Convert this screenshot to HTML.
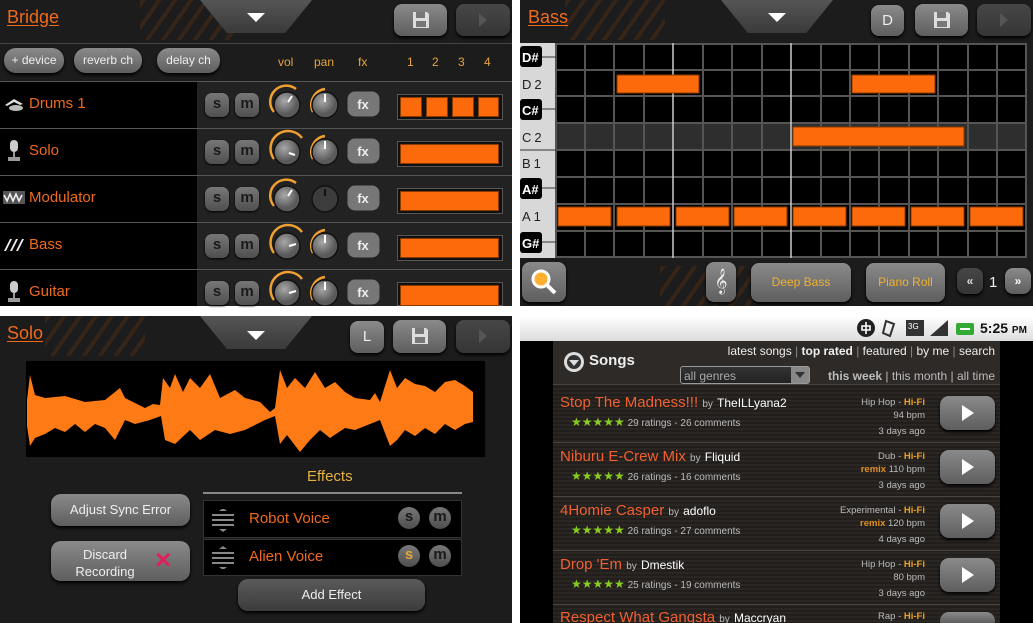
<!DOCTYPE html>
<html style="width:1033px;height:623px;overflow:hidden"><head><meta charset="utf-8"><style>
*{margin:0;padding:0;box-sizing:border-box}
body{width:1033px;height:623px;background:#fff;position:relative;overflow:hidden;font-family:"Liberation Sans",sans-serif}
.a{position:absolute}
.p{position:absolute;background:#1c1c1c;overflow:hidden}
.ttl{position:absolute;color:#f06a1c;font-size:18px;text-decoration:underline;text-underline-offset:2px}
.notch{position:absolute;width:112px;height:33px;background:linear-gradient(#555,#3a3a3a);clip-path:polygon(0 0,100% 0,76% 100%,24% 100%);border-radius:0 0 10px 10px}
.tri{position:absolute;width:0;height:0;border-left:9px solid transparent;border-right:9px solid transparent;border-top:9px solid #fff}
.btn{position:absolute;background:linear-gradient(#8a8a8a,#5e5e5e);border-radius:8px;box-shadow:0 2px 3px #000;color:#eee;text-align:center;font-size:12px}
.dim{background:linear-gradient(#474747,#353535);color:#555}
.sm{position:absolute;width:24px;height:24px;border-radius:7px;background:linear-gradient(#777,#4f4f4f);color:#1a1a1a;font-weight:bold;font-size:15px;text-align:center;line-height:22px;box-shadow:0 1px 2px #000}
.row{position:absolute;left:0;width:512px;height:47px;border-top:1px solid #555}
.nm{position:absolute;left:29px;top:13px;color:#f06a1c;font-size:15px}
.bar{position:absolute;background:#fd6a0c;border:1px solid #8a3a00}
.lbl{position:absolute;color:#e6a53a;font-size:12px}
.str{position:absolute;left:0;top:0;width:100px;height:40px;background:repeating-linear-gradient(-55deg,transparent 0 9px,#4a2a14 9px 13px);opacity:.55}
.st{color:#8c2;font-size:12px}
</style></head><body>

<!-- TOP LEFT -->
<div class="p" style="left:0;top:0;width:512px;height:306px">
 <div class="str" style="left:140px"></div>
 <div class="ttl" style="left:7px;top:7px">Bridge</div>
 <div class="notch" style="left:200px;top:0"></div><div class="tri" style="left:247px;top:13px"></div>
 <div class="btn" style="left:394px;top:4px;width:53px;height:32px"><svg width="20" height="20" viewBox="0 0 20 20" style="margin-top:6px"><path d="M2 2h14l2 2v14H2z" fill="#ddd"/><rect x="5" y="2" width="9" height="6" fill="#777"/><rect x="5" y="11" width="10" height="6" fill="#777"/></svg></div>
 <div class="btn dim" style="left:456px;top:4px;width:54px;height:32px"><svg width="12" height="16" style="margin-top:8px"><path d="M2 1l8 7-8 7z" fill="#555"/></svg></div>
 <div class="a" style="left:0;top:43px;width:512px;height:1px;background:#444"></div>
 <div class="btn" style="left:4px;top:48px;width:60px;height:25px;line-height:25px;border-radius:12px">+ device</div>
 <div class="btn" style="left:74px;top:48px;width:68px;height:25px;line-height:25px;border-radius:12px">reverb ch</div>
 <div class="btn" style="left:157px;top:48px;width:63px;height:25px;line-height:25px;border-radius:12px">delay ch</div>
 <div class="lbl" style="left:278px;top:55px">vol</div><div class="lbl" style="left:314px;top:55px">pan</div><div class="lbl" style="left:358px;top:55px">fx</div>
 <div class="lbl" style="left:407px;top:55px">1</div><div class="lbl" style="left:432px;top:55px">2</div><div class="lbl" style="left:458px;top:55px">3</div><div class="lbl" style="left:484px;top:55px">4</div>
 <div class="a" style="left:0;top:81px;width:512px;height:225px;background:#222"></div>
 <div class="a" style="left:0;top:81px;width:197px;height:225px;background:#000"></div>

 <div class="row" style="top:81px">
  <svg class="a" style="left:4px;top:14px" width="20" height="16"><path d="M1 9L10 3l9 5-3 1-6-3-7 4z" fill="#ddd"/><ellipse cx="12" cy="12" rx="7" ry="3" fill="#bbb"/></svg>
  <div class="nm">Drums 1</div>
 </div>
 <div class="row" style="top:128px"><svg class="a" style="left:7px;top:11px" width="14" height="22"><rect x="3" y="0" width="8" height="12" rx="4" fill="#ccc"/><rect x="1" y="17" width="12" height="4" fill="#999"/><rect x="6" y="12" width="2" height="6" fill="#999"/></svg><div class="nm">Solo</div></div>
 <div class="row" style="top:175px"><svg class="a" style="left:3px;top:15px" width="22" height="13"><rect width="22" height="13" fill="#555"/><path d="M1 4l3 6 3-7 3 7 3-7 3 7 3-6" stroke="#eee" stroke-width="1.6" fill="none"/></svg><div class="nm">Modulator</div></div>
 <div class="row" style="top:222px"><svg class="a" style="left:3px;top:15px" width="22" height="14"><path d="M1 13l6-12h2L3 13zM7 13l6-12h2L9 13zM13 13l6-12h2L15 13z" fill="#eee"/></svg><div class="nm">Bass</div></div>
 <div class="row" style="top:269px"><svg class="a" style="left:7px;top:11px" width="14" height="22"><rect x="3" y="0" width="8" height="12" rx="4" fill="#ccc"/><rect x="1" y="17" width="12" height="4" fill="#999"/><rect x="6" y="12" width="2" height="6" fill="#999"/></svg><div class="nm">Guitar</div></div>
</div>

<div class="sm" style="left:205px;top:93px">s</div><div class="sm" style="left:235px;top:93px">m</div>
<div class="sm" style="left:205px;top:140px">s</div><div class="sm" style="left:235px;top:140px">m</div>
<div class="sm" style="left:205px;top:187px">s</div><div class="sm" style="left:235px;top:187px">m</div>
<div class="sm" style="left:205px;top:234px">s</div><div class="sm" style="left:235px;top:234px">m</div>
<div class="sm" style="left:205px;top:281px">s</div><div class="sm" style="left:235px;top:281px">m</div>

<svg class="a" style="left:265px;top:82px" width="125" height="224">
 <defs><radialGradient id="kg" cx="40%" cy="35%"><stop offset="0" stop-color="#a8a8a8"/><stop offset="1" stop-color="#5a5a5a"/></radialGradient></defs>
 <g fill="none" stroke="#f0a030" stroke-width="2.5">
  <path d="M9 30A16 16 0 0 1 31 7"/><path d="M48 30A16 16 0 0 1 60 7"/>
  <path d="M9 77A16 16 0 0 1 37 56"/><path d="M48 77A16 16 0 0 1 60 54"/>
  <path d="M9 124A16 16 0 0 1 31 101"/>
  <path d="M9 171A16 16 0 0 1 37 150"/><path d="M48 171A16 16 0 0 1 60 148"/>
  <path d="M9 218A16 16 0 0 1 37 197"/><path d="M48 218A16 16 0 0 1 60 195"/>
 </g>
 <g fill="url(#kg)" stroke="#111" stroke-width="1.5">
  <circle cx="22" cy="23" r="13"/><circle cx="60" cy="23" r="13"/>
  <circle cx="22" cy="70" r="13"/><circle cx="60" cy="70" r="13"/>
  <circle cx="22" cy="117" r="13"/><circle cx="60" cy="117" r="13" fill="#3c3c3c"/>
  <circle cx="22" cy="164" r="13"/><circle cx="60" cy="164" r="13"/>
  <circle cx="22" cy="211" r="13"/><circle cx="60" cy="211" r="13"/>
 </g>
 <g stroke="#fff" stroke-width="2">
  <path d="M23 20l4-6"/><path d="M60 20v-8"/>
  <path d="M24 71l6 2"/><path d="M60 67v-8"/>
  <path d="M23 114l4-6"/><path d="M60 114v-7" stroke="#111"/>
  <path d="M24 164l7-2"/><path d="M60 161v-8"/>
  <path d="M24 211l7-2"/><path d="M60 208v-8"/>
 </g>
 <g fill="#777" stroke="#222"><rect x="82" y="9" width="33" height="26" rx="8"/><rect x="82" y="56" width="33" height="26" rx="8"/><rect x="82" y="103" width="33" height="26" rx="8"/><rect x="82" y="150" width="33" height="26" rx="8"/><rect x="82" y="197" width="33" height="26" rx="8"/></g>
 <g fill="#eee" font-size="13" font-family="Liberation Sans" text-anchor="middle" font-weight="bold"><text x="98" y="27">fx</text><text x="98" y="74">fx</text><text x="98" y="121">fx</text><text x="98" y="168">fx</text><text x="98" y="215">fx</text></g>
</svg>
<div class="a" style="left:397px;top:94px;width:106px;height:26px;border:1px solid #555;background:#111"></div>
<div class="bar" style="left:400px;top:97px;width:22px;height:20px"></div><div class="bar" style="left:426px;top:97px;width:22px;height:20px"></div><div class="bar" style="left:452px;top:97px;width:22px;height:20px"></div><div class="bar" style="left:478px;top:97px;width:21px;height:20px"></div>
<div class="a" style="left:397px;top:141px;width:106px;height:26px;border:1px solid #555;background:#111"></div><div class="bar" style="left:400px;top:144px;width:99px;height:20px"></div>
<div class="a" style="left:397px;top:188px;width:106px;height:26px;border:1px solid #555;background:#111"></div><div class="bar" style="left:400px;top:191px;width:99px;height:20px"></div>
<div class="a" style="left:397px;top:235px;width:106px;height:26px;border:1px solid #555;background:#111"></div><div class="bar" style="left:400px;top:238px;width:99px;height:20px"></div>
<div class="a" style="left:397px;top:282px;width:106px;height:24px;border:1px solid #555;background:#111"></div><div class="bar" style="left:400px;top:285px;width:99px;height:21px"></div>

<!-- TOP RIGHT -->
<div class="p" style="left:520px;top:0;width:513px;height:306px">
 <div class="str" style="left:45px"></div>
 <div class="ttl" style="left:8px;top:7px">Bass</div>
 <div class="notch" style="left:201px;top:0"></div><div class="tri" style="left:248px;top:13px"></div>
 <div class="btn" style="left:351px;top:5px;width:33px;height:31px;line-height:31px;font-size:15px">D</div>
 <div class="btn" style="left:395px;top:4px;width:53px;height:32px"><svg width="20" height="20" viewBox="0 0 20 20" style="margin-top:6px"><path d="M2 2h14l2 2v14H2z" fill="#ddd"/><rect x="5" y="2" width="9" height="6" fill="#777"/><rect x="5" y="11" width="10" height="6" fill="#777"/></svg></div>
 <div class="btn dim" style="left:457px;top:4px;width:54px;height:32px"><svg width="12" height="16" style="margin-top:8px"><path d="M2 1l8 7-8 7z" fill="#555"/></svg></div>
 <svg class="a" style="left:0;top:43px" width="513" height="215">
  <rect x="0" y="0" width="36" height="215" fill="#d8d8d8"/>
  <rect x="36" y="0" width="470" height="215" fill="#000"/>
  <rect x="36" y="80" width="470" height="27" fill="#2e2e2e"/>
  <g stroke="#555" stroke-width="2">
   <path d="M36 1H506M36 27H506M36 53H506M36 80H506M36 107H506M36 134H506M36 161H506M36 188H506M36 214H506"/>
   <path d="M36 0V215M65 0V215M94 0V215M124 0V215M183 0V215M212 0V215M242 0V215M301 0V215M330 0V215M359 0V215M389 0V215M418 0V215M448 0V215M477 0V215M506 0V215"/>
  </g>
  <g stroke="#ccc" stroke-width="1.5"><path d="M153 0V215M271 0V215"/></g>
  <g fill="#000"><rect x="0" y="3" width="22" height="21" rx="3"/><rect x="0" y="56" width="22" height="21" rx="3"/><rect x="0" y="135" width="22" height="21" rx="3"/><rect x="0" y="189" width="22" height="21" rx="3"/></g>
  <g stroke="#333"><path d="M22 14H36M22 66H36M22 145H36M22 199H36M0 107H36"/></g>
  <g font-family="Liberation Sans" font-size="13" font-weight="bold"><g fill="#fff"><text x="2" y="19">D#</text><text x="2" y="72">C#</text><text x="2" y="151">A#</text><text x="2" y="205">G#</text></g>
  <g fill="#222" font-weight="normal" letter-spacing="3"><text x="2" y="46">D2</text><text x="2" y="99">C2</text><text x="2" y="125">B1</text><text x="2" y="178">A1</text></g></g>
  <g fill="#fd6a0c" stroke="#8a3a00"><rect x="97" y="32" width="82" height="18"/><rect x="332" y="32" width="83" height="18"/><rect x="273" y="84" width="171" height="19"/>
   <rect x="38" y="164" width="53" height="19"/><rect x="97" y="164" width="53" height="19"/><rect x="156" y="164" width="53" height="19"/><rect x="214" y="164" width="53" height="19"/><rect x="273" y="164" width="53" height="19"/><rect x="332" y="164" width="53" height="19"/><rect x="391" y="164" width="53" height="19"/><rect x="450" y="164" width="53" height="19"/></g>
 </svg>
 <div class="str" style="left:140px;top:266px"></div>
 <div class="btn" style="left:2px;top:262px;width:44px;height:40px"><svg width="30" height="30" style="margin-top:5px"><circle cx="12" cy="12" r="8" stroke="#fff" stroke-width="3" fill="#ffb030"/><path d="M18 18l8 8" stroke="#fff" stroke-width="4"/></svg></div>
 <div class="btn" style="left:186px;top:262px;width:30px;height:40px;font-size:22px;line-height:38px">𝄞</div>
 <div class="btn" style="left:231px;top:263px;width:100px;height:39px;line-height:39px;color:#f0b030">Deep Bass</div>
 <div class="btn" style="left:346px;top:263px;width:79px;height:39px;line-height:39px;color:#f0b030">Piano Roll</div>
 <div class="btn dim" style="left:437px;top:268px;width:26px;height:26px;line-height:26px;color:#ddd;font-weight:bold">«</div>
 <div class="a" style="left:469px;top:274px;color:#eee;font-size:15px">1</div>
 <div class="btn" style="left:485px;top:268px;width:26px;height:26px;line-height:26px;color:#fff;font-weight:bold">»</div>
</div>

<!-- BOTTOM LEFT -->
<div class="p" style="left:0;top:316px;width:512px;height:307px">
 <div class="str" style="left:45px"></div>
 <div class="ttl" style="left:7px;top:7px">Solo</div>
 <div class="notch" style="left:200px;top:0"></div><div class="tri" style="left:247px;top:15px"></div>
 <div class="btn" style="left:350px;top:5px;width:34px;height:32px;line-height:32px;font-size:15px">L</div>
 <div class="btn" style="left:393px;top:4px;width:53px;height:33px"><svg width="20" height="20" viewBox="0 0 20 20" style="margin-top:6px"><path d="M2 2h14l2 2v14H2z" fill="#ddd"/><rect x="5" y="2" width="9" height="6" fill="#777"/><rect x="5" y="11" width="10" height="6" fill="#777"/></svg></div>
 <div class="btn dim" style="left:456px;top:4px;width:54px;height:33px"><svg width="12" height="16" style="margin-top:8px"><path d="M2 1l8 7-8 7z" fill="#555"/></svg></div>
 <svg class="a" style="left:25px;top:44px" width="461" height="98"><rect width="461" height="98" fill="#000" stroke="#333"/>
  <polygon fill="#fd7a14" points="2,40 5,15 10,35 20,38 40,36 60,42 80,40 95,28 100,38 120,48 128,44 135,45 138,18 145,28 150,14 158,32 165,18 175,28 185,14 195,38 210,30 220,38 235,42 245,52 250,48 255,10 262,28 270,18 280,28 290,12 300,28 310,22 320,32 330,38 345,40 350,33 355,42 365,10 372,28 380,18 390,24 400,26 410,32 420,22 430,20 440,26 448,32 448,62 440,64 430,70 420,64 410,74 400,68 390,76 380,70 372,80 365,86 355,60 345,64 330,70 320,68 305,78 295,70 285,80 275,92 262,75 255,84 250,56 240,60 220,70 205,74 190,70 175,80 165,70 150,84 140,80 136,56 125,60 110,64 100,60 90,80 80,68 70,64 60,72 50,64 40,72 30,68 20,74 10,78 5,86 2,66"/>
 </svg>
 <div class="a" style="left:307px;top:152px;color:#e6b040;font-size:15px">Effects</div>
 <div class="a" style="left:203px;top:176px;width:259px;height:2px;background:#888"></div>
 <div class="btn" style="left:51px;top:178px;width:139px;height:32px;line-height:32px;border-radius:10px;font-size:13px">Adjust Sync Error</div>
 <div class="btn" style="left:51px;top:225px;width:139px;height:40px;border-radius:10px;font-size:13px"><div class="a" style="left:14px;top:5px;width:80px;line-height:17px">Discard Recording</div><div class="a" style="left:104px;top:4px;color:#e0205a;font-size:28px;font-weight:bold;line-height:30px">×</div></div>
 <div class="a" style="left:203px;top:184px;width:259px;height:38px;background:#000;border:1px solid #333"></div>
 <div class="a" style="left:203px;top:223px;width:259px;height:37px;background:#000;border:1px solid #333"></div>
 <svg class="a" style="left:210px;top:193px" width="26" height="60"><g stroke="#888" stroke-width="2"><path d="M2 6h22M2 11h22M2 16h22M2 44h22M2 49h22M2 54h22"/></g><path d="M9 2l4-3 4 3zM9 20l4 3 4-3zM9 40l4-3 4 3zM9 58l4 3 4-3z" fill="#888"/></svg>
 <div class="a" style="left:249px;top:194px;color:#f06a1c;font-size:15px">Robot Voice</div>
 <div class="a" style="left:249px;top:232px;color:#f06a1c;font-size:15px">Alien Voice</div>
 <div class="sm" style="left:398px;top:191px;width:22px;height:22px;border-radius:11px;line-height:20px">s</div><div class="sm" style="left:429px;top:191px;width:22px;height:22px;border-radius:11px;line-height:20px">m</div>
 <div class="sm" style="left:398px;top:229px;width:22px;height:22px;border-radius:11px;line-height:20px;color:#e6a53a">s</div><div class="sm" style="left:429px;top:229px;width:22px;height:22px;border-radius:11px;line-height:20px">m</div>
 <div class="btn" style="left:238px;top:263px;width:187px;height:32px;line-height:32px;border-radius:10px;font-size:13px;background:linear-gradient(#5a5a5a,#3c3c3c)">Add Effect</div>
</div>

<!-- BOTTOM RIGHT -->
<div class="a" style="left:520px;top:316px;width:513px;height:307px;background:#000;overflow:hidden">
 <div class="a" style="left:0;top:0;width:513px;height:25px;background:linear-gradient(#fff,#ddd)"></div>
 <svg class="a" style="left:336px;top:2px" width="120" height="20"><circle cx="10" cy="10" r="9" fill="#222"/><path d="M6 8h8v4H6zM10 4v12" stroke="#fff" stroke-width="1.6" fill="none"/><path d="M30 3l8 3-4 12-7-3z" fill="none" stroke="#333" stroke-width="2"/><rect x="50" y="2" width="18" height="16" fill="#333"/><text x="52" y="11" fill="#fff" font-size="8" font-family="Liberation Sans">3G</text><path d="M74 18h18V2z" fill="#333"/><rect x="100" y="5" width="18" height="12" rx="2" fill="#3a3"/><path d="M104 11h10" stroke="#fff" stroke-width="2"/></svg>
 <div class="a" style="left:460px;top:4px;font-size:14px;color:#111;font-weight:bold">5:25 <span style="font-size:10px">PM</span></div>
 <div class="a" style="left:33px;top:25px;width:447px;height:282px;background:#262220"></div>
 <div class="a" style="left:33px;top:25px;width:447px;height:44px;background:#2e2a28;border-bottom:1px solid #444"></div>
 <svg class="a" style="left:43px;top:35px" width="22" height="22"><circle cx="11" cy="11" r="10" fill="#ddd"/><circle cx="11" cy="11" r="7" fill="#333"/><path d="M6 9h10l-5 6z" fill="#ddd"/></svg>
 <div class="a" style="left:69px;top:36px;color:#eee;font-size:15px;font-weight:bold">Songs</div>
 <div class="a" style="left:180px;top:28px;width:295px;text-align:right;color:#eee;font-size:12px">latest songs <span style="color:#888">|</span> <b>top rated</b> <span style="color:#888">|</span> featured <span style="color:#888">|</span> by me <span style="color:#888">|</span> search</div>
 <div class="a" style="left:160px;top:50px;width:130px;height:18px;border:1px solid #999;border-radius:3px;background:linear-gradient(#333,#222);color:#aaa;font-size:12px;padding-left:3px;line-height:18px">all genres</div>
 <div class="a" style="left:271px;top:51px;width:18px;height:16px;background:#888"><svg width="18" height="16"><path d="M4 5h10l-5 6z" fill="#333"/></svg></div>
 <div class="a" style="left:300px;top:53px;width:175px;text-align:right;color:#bbb;font-size:12px"><b>this week</b> | this month | all time</div>
</div>
<div class="a" style="left:553px;top:386px;width:447px;height:237px;background:repeating-linear-gradient(#221e1c 0 2px,#2a2624 2px 4px)"></div>
<div class="a" style="left:553px;top:442px;width:447px;height:1px;background:#444"></div>
<div class="a" style="left:553px;top:496px;width:447px;height:1px;background:#444"></div>
<div class="a" style="left:553px;top:550px;width:447px;height:1px;background:#444"></div>
<div class="a" style="left:553px;top:604px;width:447px;height:1px;background:#444"></div>

<div class="a" style="left:560px;top:394px;font-size:15px;color:#f06030;white-space:nowrap">Stop The Madness!!! <span style="font-size:10px;color:#bbb">by</span> <span style="font-size:12px;color:#fff">TheILLyana2</span></div>
<div class="a" style="left:571px;top:415px;font-size:10px;color:#bbb;white-space:nowrap"><span class="st">★★★★★</span> 29 ratings - 26 comments</div>
<div class="a" style="left:780px;top:397px;width:145px;text-align:right;font-size:9.5px;color:#bbb;line-height:12.5px">Hip Hop - <b style="color:#f0a020">Hi-Fi</b><br>94 bpm<br><span style="line-height:20px">3 days ago</span></div>

<div class="a" style="left:560px;top:448px;font-size:15px;color:#f06030;white-space:nowrap">Niburu E-Crew Mix <span style="font-size:10px;color:#bbb">by</span> <span style="font-size:12px;color:#fff">Fliquid</span></div>
<div class="a" style="left:571px;top:469px;font-size:10px;color:#bbb;white-space:nowrap"><span class="st">★★★★★</span> 26 ratings - 16 comments</div>
<div class="a" style="left:780px;top:451px;width:145px;text-align:right;font-size:9.5px;color:#bbb;line-height:12.5px">Dub - <b style="color:#f0a020">Hi-Fi</b><br><b style="color:#e09020">remix</b> 110 bpm<br><span style="line-height:20px">3 days ago</span></div>

<div class="a" style="left:560px;top:502px;font-size:15px;color:#f06030;white-space:nowrap">4Homie Casper <span style="font-size:10px;color:#bbb">by</span> <span style="font-size:12px;color:#fff">adoflo</span></div>
<div class="a" style="left:571px;top:523px;font-size:10px;color:#bbb;white-space:nowrap"><span class="st">★★★★★</span> 26 ratings - 27 comments</div>
<div class="a" style="left:780px;top:505px;width:145px;text-align:right;font-size:9.5px;color:#bbb;line-height:12.5px">Experimental - <b style="color:#f0a020">Hi-Fi</b><br><b style="color:#e09020">remix</b> 120 bpm<br><span style="line-height:20px">4 days ago</span></div>

<div class="a" style="left:560px;top:556px;font-size:15px;color:#f06030;white-space:nowrap">Drop 'Em <span style="font-size:10px;color:#bbb">by</span> <span style="font-size:12px;color:#fff">Dmestik</span></div>
<div class="a" style="left:571px;top:577px;font-size:10px;color:#bbb;white-space:nowrap"><span class="st">★★★★★</span> 25 ratings - 19 comments</div>
<div class="a" style="left:780px;top:559px;width:145px;text-align:right;font-size:9.5px;color:#bbb;line-height:12.5px">Hip Hop - <b style="color:#f0a020">Hi-Fi</b><br>80 bpm<br><span style="line-height:20px">3 days ago</span></div>

<div class="a" style="left:560px;top:609px;font-size:15px;color:#f06030;white-space:nowrap">Respect What Gangsta <span style="font-size:10px;color:#bbb">by</span> <span style="font-size:12px;color:#fff">Maccryan</span></div>
<div class="a" style="left:780px;top:611px;width:145px;text-align:right;font-size:9.5px;color:#bbb">Rap - <b style="color:#f0a020">Hi-Fi</b></div>

<div class="btn" style="left:940px;top:396px;width:55px;height:34px;border-radius:9px"><svg width="14" height="18" style="margin-top:8px"><path d="M1 1l12 8-12 8z" fill="#fff"/></svg></div>
<div class="btn" style="left:940px;top:450px;width:55px;height:34px;border-radius:9px"><svg width="14" height="18" style="margin-top:8px"><path d="M1 1l12 8-12 8z" fill="#fff"/></svg></div>
<div class="btn" style="left:940px;top:504px;width:55px;height:34px;border-radius:9px"><svg width="14" height="18" style="margin-top:8px"><path d="M1 1l12 8-12 8z" fill="#fff"/></svg></div>
<div class="btn" style="left:940px;top:558px;width:55px;height:34px;border-radius:9px"><svg width="14" height="18" style="margin-top:8px"><path d="M1 1l12 8-12 8z" fill="#fff"/></svg></div>
<div class="btn" style="left:940px;top:612px;width:55px;height:11px;border-radius:9px 9px 0 0;box-shadow:none"></div>
</body></html>
